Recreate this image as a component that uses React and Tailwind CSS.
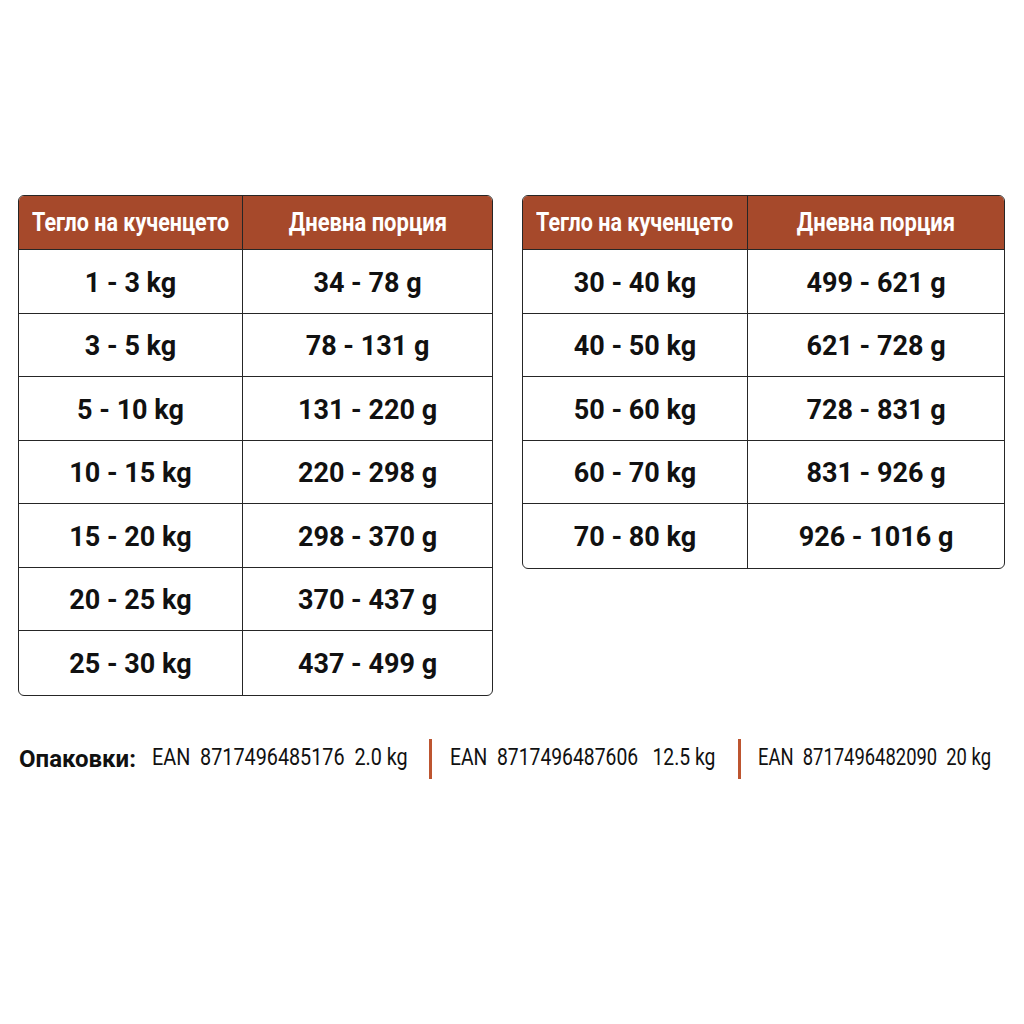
import React from "react";

const left = [
  ["1 - 3 kg", "34 - 78 g"],
  ["3 - 5 kg", "78 - 131 g"],
  ["5 - 10 kg", "131 - 220 g"],
  ["10 - 15 kg", "220 - 298 g"],
  ["15 - 20 kg", "298 - 370 g"],
  ["20 - 25 kg", "370 - 437 g"],
  ["25 - 30 kg", "437 - 499 g"],
];
const right = [
  ["30 - 40 kg", "499 - 621 g"],
  ["40 - 50 kg", "621 - 728 g"],
  ["50 - 60 kg", "728 - 831 g"],
  ["60 - 70 kg", "831 - 926 g"],
  ["70 - 80 kg", "926 - 1016 g"],
];

function Table({ rows, w1, w2 }) {
  return (
    <div className="border-[1.5px] border-[#262626] rounded-[6px] overflow-hidden" style={{ width: w1 + w2 }}>
      <div className="flex h-[54px] bg-[#a6492b] text-white text-[25px] font-bold border-b-[1.5px] border-[#262626]">
        <div className="flex items-center justify-center border-r-[1.5px] border-[#262626] whitespace-nowrap" style={{ width: w1 }}>
          <span className="inline-block scale-x-[0.86]">Тегло на кученцето</span>
        </div>
        <div className="flex items-center justify-center flex-1 whitespace-nowrap">
          <span className="inline-block scale-x-[0.88]">Дневна порция</span>
        </div>
      </div>
      {rows.map((r, i) => (
        <div key={i} className={"flex h-[63.5px] text-[27px] font-bold text-[#111] whitespace-nowrap " + (i < rows.length - 1 ? "border-b-[1.5px] border-[#262626]" : "")}>
          <div className="flex items-center justify-center border-r-[1.5px] border-[#262626] pt-[3px]" style={{ width: w1 }}>{r[0]}</div>
          <div className="flex items-center justify-center flex-1 pt-[3px]">{r[1]}</div>
        </div>
      ))}
    </div>
  );
}

function Ean({ w, s, children }) {
  return (
    <span className="whitespace-nowrap" style={{ width: w }}>
      <span className={"inline-block origin-left " + s}>{children}</span>
    </span>
  );
}

export default function App() {
  return (
    <div className="w-[1024px] h-[1024px] bg-white" style={{ fontFamily: 'Roboto, "Liberation Sans", sans-serif' }}>
      <div className="flex items-start gap-[29px] pt-[195px] pl-[18px]">
        <Table rows={left} w1={224} w2={251} />
        <Table rows={right} w1={225} w2={258} />
      </div>
      <div className="flex items-center pl-[19px] mt-[43px] text-[23px] text-[#111] h-[40px]">
        <span className="font-bold text-[24px] w-[133px] whitespace-nowrap">Опаковки:</span>
        <Ean w={277} s="scale-x-[0.86]">EAN&nbsp;&nbsp;8717496485176&nbsp;&nbsp;2.0 kg</Ean>
        <span className="w-[3px] h-[40px] bg-[#bd5530] mr-[18px]"></span>
        <Ean w={288} s="scale-x-[0.84]">EAN&nbsp;&nbsp;8717496487606&nbsp;&nbsp;&nbsp;12.5 kg</Ean>
        <span className="w-[3px] h-[40px] bg-[#bd5530] mr-[17px]"></span>
        <Ean w={240} s="scale-x-[0.80]">EAN&nbsp;&nbsp;8717496482090&nbsp;&nbsp;20 kg</Ean>
      </div>
    </div>
  );
}
